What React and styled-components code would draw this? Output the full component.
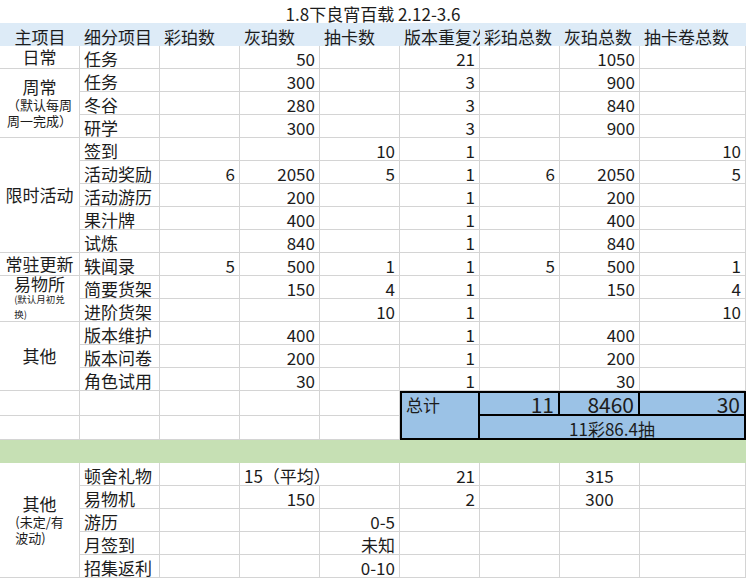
import React from "react";
import styled, { createGlobalStyle, css } from "styled-components";

const GlobalStyle = createGlobalStyle`
  html, body {
    margin: 0;
    padding: 0;
    background: #ffffff;
  }
  body {
    font-family: "Noto Sans CJK SC", "Noto Sans", sans-serif;
    color: #1c1c1c;
  }
`;

const justify = { l: "flex-start", r: "flex-end", c: "center" };

const gridCell = css`
  grid-column: ${(p) => p.$c} / span ${(p) => p.$cs || 1};
  grid-row: ${(p) => p.$r} / span ${(p) => p.$rs || 1};
  box-sizing: border-box;
  min-width: 0;
`;

const Sheet = styled.div`
  display: grid;
  grid-template-columns: repeat(8, 80px) 106px;
  grid-template-rows: repeat(17, 23px) 24.5px 24.5px 23px repeat(5, 23px);
  width: 746px;
  font-size: 17px;
`;

const Cell = styled.div`
  ${gridCell};
  display: flex;
  align-items: flex-end;
  justify-content: ${(p) => justify[p.$align || "l"]};
  padding: 0 4px;
  line-height: 18px;
  white-space: nowrap;
  border-right: 1px solid #d4d4d4;
  border-bottom: 1px solid #d4d4d4;
`;

const TitleCell = styled(Cell)`
  border: none;
  justify-content: center;
`;

const HeadCell = styled(Cell)`
  border: none;
  background: #ddebf7;
  overflow: ${(p) => (p.$clip ? "hidden" : "visible")};
`;

const GroupCell = styled.div`
  ${gridCell};
  display: flex;
  flex-direction: column;
  align-items: center;
  justify-content: center;
  border-right: 1px solid #d4d4d4;
  border-bottom: 1px solid #d4d4d4;
`;

const GroupLabel = styled.div`
  line-height: ${(p) => (p.$tight ? "17px" : "20px")};
  white-space: nowrap;
`;

const GroupNote = styled.div`
  display: inline-block;
  text-align: left;
  font-size: ${(p) => (p.$tiny ? "9.5px" : "13px")};
  line-height: ${(p) => (p.$tiny ? "15px" : "16px")};
  white-space: nowrap;
`;

const Band = styled.div`
  ${gridCell};
  background: #c6e0b4;
`;

const TotalCell = styled(Cell)`
  background: #9bc2e6;
  border-right: 2px solid #000;
  border-bottom: 2px solid #000;
  border-top: ${(p) => (p.$top ? "2px solid #000" : "none")};
  border-left: ${(p) => (p.$left ? "2px solid #000" : "none")};
  font-size: ${(p) => (p.$big ? "21px" : "17px")};
  line-height: ${(p) => (p.$big ? "20px" : "19px")};
`;

const TotalLabel = styled(TotalCell)`
  align-items: flex-start;
  line-height: 22px;
  padding-top: 1px;
`;

const headers = [
  { t: "主项目", a: "c" },
  { t: "细分项目" },
  { t: "彩珀数" },
  { t: "灰珀数" },
  { t: "抽卡数" },
  { t: "版本重复次数", clip: true },
  { t: "彩珀总数" },
  { t: "灰珀总数" },
  { t: "抽卡卷总数" },
];

const groups = [
  { r: 3, rs: 1, label: "日常" },
  { r: 4, rs: 3, label: "周常", note: ["（默认每周", "周一完成）"] },
  { r: 7, rs: 5, label: "限时活动" },
  { r: 12, rs: 1, label: "常驻更新" },
  { r: 13, rs: 2, label: "易物所", note: ["(默认月初兑", "换)"], tiny: true },
  { r: 15, rs: 3, label: "其他" },
  { r: 18, rs: 1 },
  { r: 19, rs: 1 },
  { r: 21, rs: 5, label: "其他", note: ["(未定/有", "波动)"] },
];

const rows = [
  [3, "任务", "", 50, "", 21, "", 1050, ""],
  [4, "任务", "", 300, "", 3, "", 900, ""],
  [5, "冬谷", "", 280, "", 3, "", 840, ""],
  [6, "研学", "", 300, "", 3, "", 900, ""],
  [7, "签到", "", "", 10, 1, "", "", 10],
  [8, "活动奖励", 6, 2050, 5, 1, 6, 2050, 5],
  [9, "活动游历", "", 200, "", 1, "", 200, ""],
  [10, "果汁牌", "", 400, "", 1, "", 400, ""],
  [11, "试炼", "", 840, "", 1, "", 840, ""],
  [12, "轶闻录", 5, 500, 1, 1, 5, 500, 1],
  [13, "简要货架", "", 150, 4, 1, "", 150, 4],
  [14, "进阶货架", "", "", 10, 1, "", "", 10],
  [15, "版本维护", "", 400, "", 1, "", 400, ""],
  [16, "版本问卷", "", 200, "", 1, "", 200, ""],
  [17, "角色试用", "", 30, "", 1, "", 30, ""],
  [18, "", "", "", ""],
  [19, "", "", "", ""],
  [21, "顿舍礼物", "", { t: "15（平均）", cs: 2 }, 21, "", { t: 315, a: "c" }, ""],
  [22, "易物机", "", 150, "", 2, "", { t: 300, a: "c" }, ""],
  [23, "游历", "", "", { t: "0-5", a: "r" }, "", "", "", ""],
  [24, "月签到", "", "", { t: "未知", a: "r" }, "", "", "", ""],
  [25, "招集返利", "", "", { t: "0-10", a: "r" }, "", "", "", ""],
];

function SheetRow({ r, cells }) {
  let c = 2;
  return cells.map((raw) => {
    const cell = raw !== null && typeof raw === "object" ? raw : { t: raw };
    const cs = cell.cs || 1;
    const align = cell.a || (typeof cell.t === "number" ? "r" : "l");
    const el = (
      <Cell key={`${r}-${c}`} $r={r} $c={c} $cs={cs} $align={align}>
        {cell.t}
      </Cell>
    );
    c += cs;
    return el;
  });
}

export default function App() {
  return (
    <>
      <GlobalStyle />
      <Sheet>
        <TitleCell $r={1} $c={1} $cs={9}>
          1.8下良宵百载 2.12-3.6
        </TitleCell>

        {headers.map((h, i) => (
          <HeadCell key={h.t} $r={2} $c={i + 1} $align={h.a} $clip={h.clip}>
            {h.t}
          </HeadCell>
        ))}

        {groups.map((g) => (
          <GroupCell key={g.r} $r={g.r} $rs={g.rs} $c={1}>
            {g.label && <GroupLabel $tight={g.tiny}>{g.label}</GroupLabel>}
            {g.note && (
              <GroupNote $tiny={g.tiny}>
                {g.note[0]}
                <br />
                {g.note[1]}
              </GroupNote>
            )}
          </GroupCell>
        ))}

        {rows.map(([r, ...cells]) => (
          <SheetRow key={r} r={r} cells={cells} />
        ))}

        <TotalLabel $r={18} $rs={2} $c={6} $top $left>
          总计
        </TotalLabel>
        <TotalCell $r={18} $c={7} $align="r" $top $big>
          11
        </TotalCell>
        <TotalCell $r={18} $c={8} $align="r" $top $big>
          8460
        </TotalCell>
        <TotalCell $r={18} $c={9} $align="r" $top $big>
          30
        </TotalCell>
        <TotalCell $r={19} $c={7} $cs={3} $align="c">
          11彩86.4抽
        </TotalCell>

        <Band $r={20} $c={1} $cs={9} />
      </Sheet>
    </>
  );
}
